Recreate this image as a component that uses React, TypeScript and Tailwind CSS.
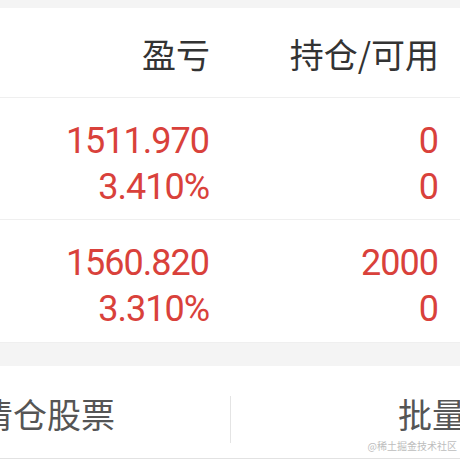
import React from 'react';

const rows = [
  { pl: '1511.970', pct: '3.410%', hold: '0', avail: '0' },
  { pl: '1560.820', pct: '3.310%', hold: '2000', avail: '0' },
];

const cjk = { fontFamily: '"Noto Sans CJK SC", "Noto Sans", sans-serif' };
const num = { fontFamily: 'Roboto, "Liberation Sans", sans-serif' };

export default function App() {
  return (
    <div className="relative w-[460px] h-[460px] overflow-hidden bg-white" style={cjk}>
      <div className="h-[8px] bg-[#f4f4f4]" />

      {/* Header */}
      <div className="flex h-[90px] items-center pt-[2px] border-b border-[#efefef] text-[34px] text-[#333]">
        <div className="w-[210px] text-right">盈亏</div>
        <div className="w-[229px] text-right">持仓/可用</div>
      </div>

      {/* Positions */}
      {rows.map((r, i) => (
        <div
          key={i}
          className={`flex pt-[20px] border-b border-[#efefef] text-[36px] leading-[46px] tracking-[-1px] text-[#d9413b] ${
            i === 0 ? 'h-[122px]' : 'h-[123px]'
          }`}
          style={num}
        >
          <div className="w-[209px] text-right">
            <div>{r.pl}</div>
            <div>{r.pct}</div>
          </div>
          <div className="w-[229px] text-right">
            <div>{r.hold}</div>
            <div>{r.avail}</div>
          </div>
        </div>
      ))}

      <div className="h-[23px] bg-[#f4f4f4]" />

      {/* Bottom actions */}
      <div className="flex h-[93px] items-center pt-[4px] border-b border-[#e2e2e2] text-[34px] leading-[36px] text-[#555]">
        <div className="w-[230px] whitespace-nowrap">
          <span className="ml-[-21px]">清仓股票</span>
        </div>
        <div className="w-px h-[47px] mt-[10px] bg-[#e4e4e4]" />
        <div className="flex-1 whitespace-nowrap overflow-hidden">
          <span className="ml-[167px]">批量卖出</span>
        </div>
      </div>

      <div className="absolute right-[3px] bottom-[8px] text-[10px] leading-[12px] text-[#bdbdbd]">@稀土掘金技术社区</div>
    </div>
  );
}
